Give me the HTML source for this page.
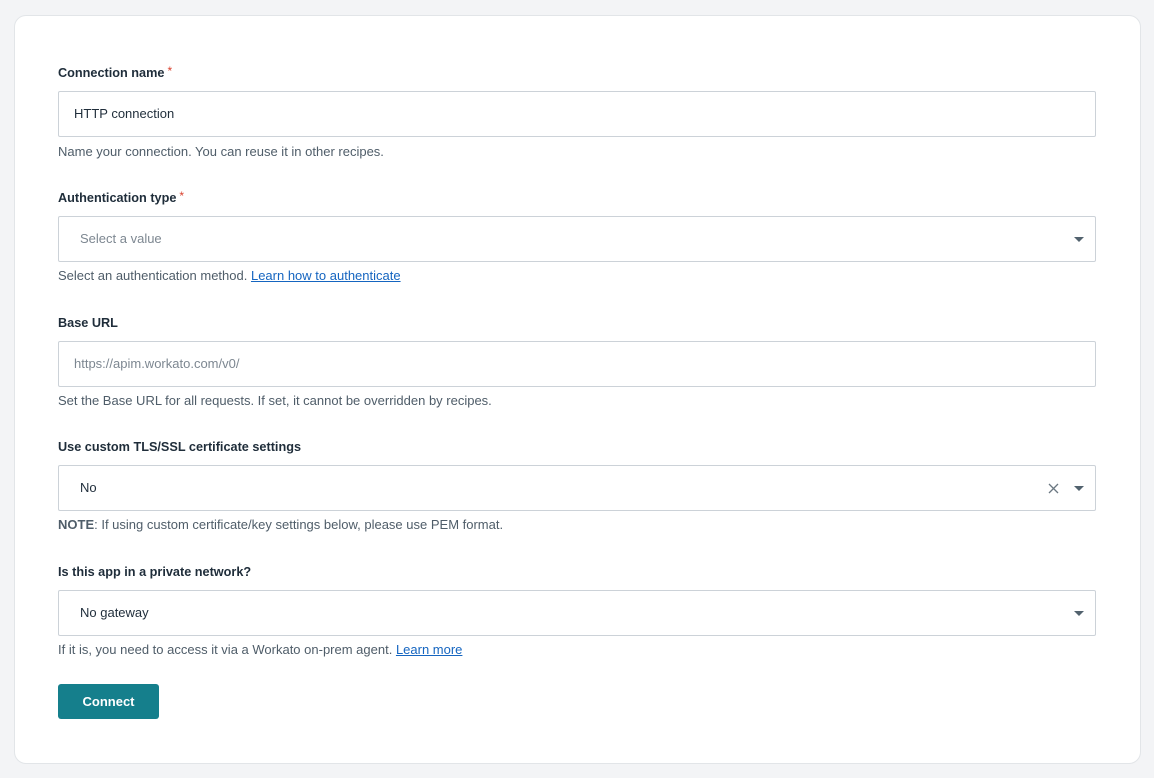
<!DOCTYPE html>
<html><head><style>
body{margin:0;width:1154px;height:778px;background:#f3f4f6;font-family:"Liberation Sans",sans-serif;position:relative;overflow:hidden}
.card{position:absolute;left:14px;top:15px;width:1125px;height:747px;background:#fff;border:1px solid #e2e5e8;border-radius:12px}
.lbl{position:absolute;left:58px;font-size:12.7px;font-weight:bold;color:#1f2d3a}
.lbl i{color:#d9412e;font-style:normal;font-weight:normal;margin-left:3px;font-size:12px;vertical-align:top;position:relative;top:-2px}
.inp{position:absolute;left:58px;width:1036px;height:44px;border:1px solid #ccd2d8;border-radius:2px;background:#fff;font-size:13px;color:#1f2d3a;line-height:44px;box-sizing:content-box}
.inp span{position:absolute;left:21px}
.ph{color:#7d8791}
.help{position:absolute;left:58px;font-size:13px;color:#4f5d69}
.help a{color:#1565c0;text-decoration:underline}
.arr{position:absolute;right:11px;top:20px;width:0;height:0;border-left:5px solid transparent;border-right:5px solid transparent;border-top:5px solid #52626e}
.btn{position:absolute;left:58px;top:684px;width:101px;height:35px;background:#157f8c;border-radius:3px;color:#fff;font-weight:bold;font-size:13px;text-align:center;line-height:35px}
</style></head><body>
<div class="card"></div>
<div class="lbl" style="top:66px">Connection name<i>*</i></div>
<div class="inp" style="top:91px"><span style="left:15px">HTTP connection</span></div>
<div class="help" style="top:144px">Name your connection. You can reuse it in other recipes.</div>

<div class="lbl" style="top:191px">Authentication type<i>*</i></div>
<div class="inp" style="top:216px"><span class="ph">Select a value</span><div class="arr"></div></div>
<div class="help" style="top:268px">Select an authentication method. <a>Learn how to authenticate</a></div>

<div class="lbl" style="top:316px">Base URL</div>
<div class="inp" style="top:341px"><span class="ph" style="left:15px">https://apim.workato.com/v0/</span></div>
<div class="help" style="top:393px">Set the Base URL for all requests. If set, it cannot be overridden by recipes.</div>

<div class="lbl" style="top:440px">Use custom TLS/SSL certificate settings</div>
<div class="inp" style="top:465px"><span>No</span>
<svg style="position:absolute;right:36px;top:17px" width="11" height="11" viewBox="0 0 11 11"><path d="M1 1L10 10M10 1L1 10" stroke="#6b7882" stroke-width="1.3"/></svg>
<div class="arr"></div></div>
<div class="help" style="top:517px"><b>NOTE</b>: If using custom certificate/key settings below, please use PEM format.</div>

<div class="lbl" style="top:565px">Is this app in a private network?</div>
<div class="inp" style="top:590px"><span>No gateway</span><div class="arr"></div></div>
<div class="help" style="top:642px">If it is, you need to access it via a Workato on-prem agent. <a>Learn more</a></div>

<div class="btn">Connect</div>
</body></html>
